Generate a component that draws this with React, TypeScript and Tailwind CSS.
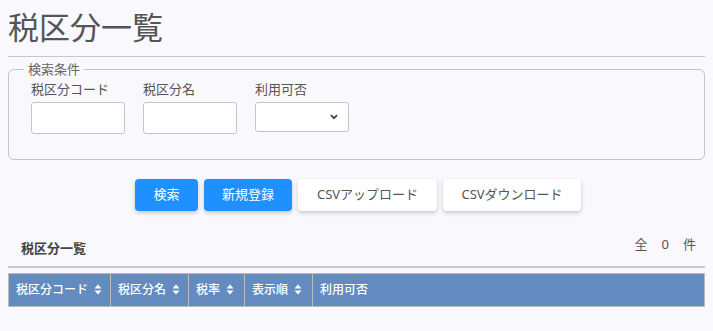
import React from 'react';

const SortIcon = () => (
  <svg width="8" height="11" viewBox="0 0 8 11" className="ml-1.5 inline-block">
    <path d="M4 0.5 L7.5 4.5 H0.5 Z" fill="#fff" />
    <path d="M4 10.5 L7.5 6.5 H0.5 Z" fill="#fff" />
  </svg>
);

const columns = [
  { label: '税区分コード', width: 'w-[102px]', sortable: true },
  { label: '税区分名', width: 'w-[78px]', sortable: true },
  { label: '税率', width: 'w-[56px]', sortable: true },
  { label: '表示順', width: 'w-[68px]', sortable: true },
  { label: '利用可否', width: '', sortable: false },
];

const App = () => {
  return (
    <div className="min-h-[331px] bg-[#f8f8fd] px-2 pt-[7px] text-[#555] [font-family:'Noto_Sans','Noto_Sans_CJK_JP',sans-serif]">
      <h1 className="text-[31px] leading-[40px] font-normal text-[#555]">税区分一覧</h1>
      <div className="mt-[9px] h-px bg-[#c8c8c8]" />

      <fieldset className="mt-[5px] h-[98px] rounded-[6px] border border-[#c4c4c4] px-[22px] pt-0">
        <legend className="-ml-[7px] px-[4px] text-[13px] leading-[14px] text-[#666]">検索条件</legend>
        <div className="mt-[4px] flex gap-[18px]">
          <div className="flex flex-col">
            <label className="text-[13px] leading-[18px] text-[#555]">税区分コード</label>
            <input className="mt-[4px] h-[32px] w-[94px] rounded-[3px] border border-[#c4c4c4] bg-white" />
          </div>
          <div className="flex flex-col">
            <label className="text-[13px] leading-[18px] text-[#555]">税区分名</label>
            <input className="mt-[4px] h-[32px] w-[94px] rounded-[3px] border border-[#c4c4c4] bg-white" />
          </div>
          <div className="flex flex-col">
            <label className="text-[13px] leading-[18px] text-[#555]">利用可否</label>
            <div className="mt-[4px] flex h-[30px] w-[94px] items-center justify-end rounded-[3px] border border-[#c4c4c4] bg-white pr-[10px]">
              <svg width="8" height="6" viewBox="0 0 8 6">
                <path d="M1 1.2 L4 4.2 L7 1.2" stroke="#444" strokeWidth="1.8" fill="none" />
              </svg>
            </div>
          </div>
        </div>
      </fieldset>

      <div className="mt-[19px] flex justify-center gap-[6px] pl-[3px]">
        <button className="h-[32px] w-[63px] rounded-[4px] bg-[#1e90ff] text-[13px] text-white shadow-[0_2px_4px_rgba(0,0,0,0.2)]">検索</button>
        <button className="h-[32px] w-[88px] rounded-[4px] bg-[#1e90ff] text-[13px] text-white shadow-[0_2px_4px_rgba(0,0,0,0.2)]">新規登録</button>
        <button className="h-[32px] w-[139px] rounded-[4px] bg-white text-[13px] text-[#555] shadow-[0_2px_4px_rgba(0,0,0,0.2)]">CSVアップロード</button>
        <button className="h-[32px] w-[138px] rounded-[4px] bg-white text-[13px] text-[#555] shadow-[0_2px_4px_rgba(0,0,0,0.2)]">CSVダウンロード</button>
      </div>

      <div className="mt-[24px] flex items-end justify-between pl-[13px] pr-[9px] pb-[7px]">
        <span className="text-[13px] font-bold text-[#444]">税区分一覧</span>
        <span className="mb-[4px] flex gap-[14px] text-[13px] text-[#555]">
          <span>全</span>
          <span>0</span>
          <span>件</span>
        </span>
      </div>
      <div className="h-[2px] bg-[#c8c8c8]" />

      <table className="mt-[5px] w-full border-collapse">
        <thead>
          <tr className="bg-[#648bbf]">
            {columns.map((c) => (
              <th
                key={c.label}
                className={`${c.width} h-[33px] border border-[#bbb] px-[7px] text-left text-[12px] font-medium text-white`}
              >
                <span className="inline-flex items-center">
                  {c.label}
                  {c.sortable && <SortIcon />}
                </span>
              </th>
            ))}
          </tr>
        </thead>
      </table>
    </div>
  );
};

export default App;
